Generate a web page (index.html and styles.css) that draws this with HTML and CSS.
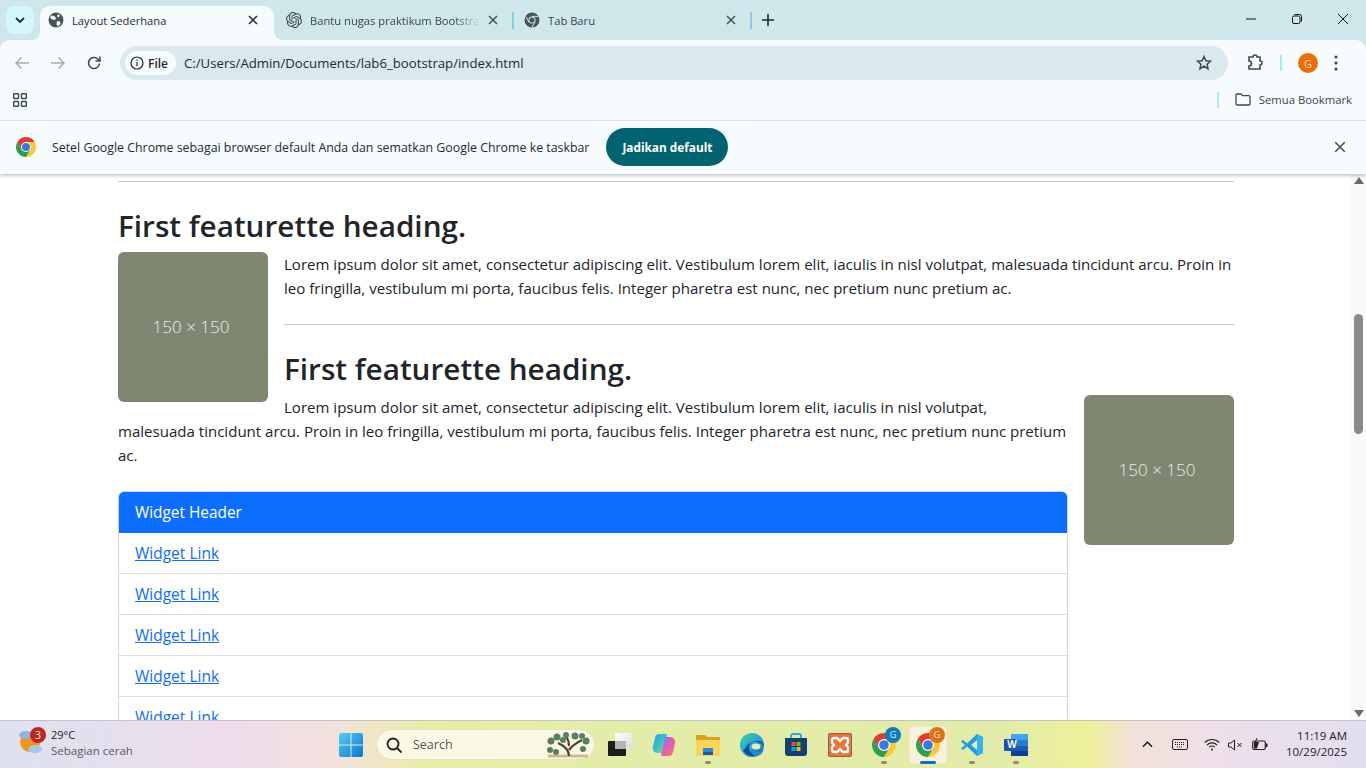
FILE: index.html
```html
<!DOCTYPE html>
<html lang="id">
<head>
<meta charset="utf-8">
<title>Layout Sederhana</title>
<link rel="stylesheet" href="styles.css">
</head>
<body>
<div class="screen">
  <header class="tabstrip">
    <div class="tabsearch"><svg width="10" height="6" viewBox="0 0 10 6"><path d="M1 1l4 4 4-4" fill="none" stroke="#1f2a30" stroke-width="1.8"/></svg></div>
    <div class="tab active">
      <svg class="fav" width="16" height="16" viewBox="0 0 16 16"><circle cx="8" cy="8" r="7.5" fill="#4a5358"/><path d="M3 3.5l3 .5 2 2-1 2-2.5-.5L2 6zM9 9l3 .5.5 2.5-2.5 2.5-1.500-2z M10 2l2 1.500-1.500 2L9 4z" fill="#f6fbfe"/></svg>
      <span class="tabtitle">Layout Sederhana</span>
      <svg class="tabx" width="10" height="10" viewBox="0 0 10 10"><path d="M1 1l8 8M9 1l-8 8" stroke="#1f2a30" stroke-width="1.5"/></svg>
    </div>
    <div class="tab">
      <svg class="fav" width="16" height="16" viewBox="0 0 24 24" fill="#3e4a50"><path d="M22.2819 9.8211a5.9847 5.9847 0 0 0-.5157-4.9108 6.0462 6.0462 0 0 0-6.5098-2.9A6.0651 6.0651 0 0 0 4.9807 4.1818a5.9847 5.9847 0 0 0-3.9977 2.9 6.0462 6.0462 0 0 0 .7427 7.0966 5.98 5.98 0 0 0 .511 4.9107 6.051 6.051 0 0 0 6.5146 2.9001A5.9847 5.9847 0 0 0 13.2599 24a6.0557 6.0557 0 0 0 5.7718-4.2058 5.9894 5.9894 0 0 0 3.9977-2.9001 6.0557 6.0557 0 0 0-.7475-7.0729zm-9.022 12.6081a4.4755 4.4755 0 0 1-2.8764-1.0408l.1419-.0804 4.7783-2.7582a.7948.7948 0 0 0 .3927-.6813v-6.7369l2.02 1.1686a.071.071 0 0 1 .038.052v5.5826a4.504 4.504 0 0 1-4.4945 4.4944zm-9.6607-4.1254a4.4708 4.4708 0 0 1-.5346-3.0137l.142.0852 4.783 2.7582a.7712.7712 0 0 0 .7806 0l5.8428-3.3685v2.3324a.0804.0804 0 0 1-.0332.0615L9.74 19.9502a4.4992 4.4992 0 0 1-6.1408-1.6464zM2.3408 7.8956a4.485 4.485 0 0 1 2.3655-1.9728V11.6a.7664.7664 0 0 0 .3879.6765l5.8144 3.3543-2.0201 1.1685a.0757.0757 0 0 1-.071 0l-4.8303-2.7865A4.504 4.504 0 0 1 2.3408 7.872zm16.5963 3.8558L13.1038 8.364 15.1192 7.2a.0757.0757 0 0 1 .071 0l4.8303 2.7913a4.4944 4.4944 0 0 1-.6765 8.1042v-5.6772a.79.79 0 0 0-.407-.667zm2.0107-3.0231l-.142-.0852-4.7735-2.7818a.7759.7759 0 0 0-.7854 0L9.409 9.2297V6.8974a.0662.0662 0 0 1 .0284-.0615l4.8303-2.7866a4.4992 4.4992 0 0 1 6.6802 4.66zM8.3065 12.863l-2.02-1.1638a.0804.0804 0 0 1-.038-.0567V6.0742a4.4992 4.4992 0 0 1 7.3757-3.4537l-.142.0805L8.704 5.459a.7948.7948 0 0 0-.3927.6813zm1.0976-2.3654l2.602-1.4998 2.6069 1.4998v2.9994l-2.5974 1.4997-2.6067-1.4997Z"/></svg>
      <span class="tabtitle fade">Bantu nugas praktikum Bootstrap</span>
      <svg class="tabx" width="10" height="10" viewBox="0 0 10 10"><path d="M1 1l8 8M9 1l-8 8" stroke="#3e4a50" stroke-width="1.4"/></svg>
    </div>
    <i class="tabsep"></i>
    <div class="tab">
      <svg class="fav" width="16" height="16" viewBox="0 0 16 16"><circle cx="8" cy="8" r="7.500" fill="#4a5358"/><circle cx="8" cy="8" r="3.600" fill="#cfe6eb"/><circle cx="8" cy="8" r="2.600" fill="#4a5358"/><path d="M8 4.400h6.500M5 10.200L1.800 4.500M11.100 9.900L7.800 15.400" stroke="#cfe6eb" stroke-width="1"/></svg>
      <span class="tabtitle">Tab Baru</span>
      <svg class="tabx" width="10" height="10" viewBox="0 0 10 10"><path d="M1 1l8 8M9 1l-8 8" stroke="#3e4a50" stroke-width="1.4"/></svg>
    </div>
    <i class="tabsep"></i>
    <svg class="newtab" width="12" height="12" viewBox="0 0 12 12"><path d="M6 0v12M0 6h12" stroke="#1f2a30" stroke-width="1.600"/></svg>
    <div class="wincontrols">
      <svg width="10" height="10" viewBox="0 0 10 10"><path d="M0 5h10" stroke="#111" stroke-width="1"/></svg>
      <svg width="10" height="10" viewBox="0 0 10 10" fill="none" stroke="#111" stroke-width="1"><rect x=".5" y="2" width="7.500" height="7.500" rx="1.500"/><path d="M2.500 .5h5a2 2 0 0 1 2 2v5"/></svg>
      <svg width="10" height="10" viewBox="0 0 10 10"><path d="M0 0l10 10M10 0L0 10" stroke="#111" stroke-width="1"/></svg>
    </div>
  </header>

  <nav class="toolbar">
    <svg class="navicon" width="16" height="16" viewBox="0 0 16 16" fill="none" stroke="#a4adb1" stroke-width="1.500"><path d="M15 8H2M7.500 2.500L2 8l5.500 5.500"/></svg>
    <svg class="navicon" width="16" height="16" viewBox="0 0 16 16" fill="none" stroke="#a4adb1" stroke-width="1.500"><path d="M1 8h13M8.500 2.500L14 8l-5.500 5.500"/></svg>
    <svg class="navicon" width="16" height="16" viewBox="0 0 16 16" fill="none" stroke="#3e4a50" stroke-width="1.600"><path d="M13.500 8.500a5.500 5.500 0 1 1-1.500-4.300L14 6"/><path d="M14 1.500V6H9.500" stroke-width="1.500"/></svg>
    <div class="omnibox">
      <div class="chip">
        <svg width="14" height="14" viewBox="0 0 14 14" fill="none" stroke="#1f2a30" stroke-width="1.200"><circle cx="7" cy="7" r="6"/><path d="M7 6v4.200M7 3.500v1.300"/></svg>
        <span>File</span>
      </div>
      <span class="url">C:/Users/Admin/Documents/lab6_bootstrap/index.html</span>
      <svg class="star" width="16" height="16" viewBox="0 0 16 16" fill="none" stroke="#3e4a50" stroke-width="1.500"><path d="M8 1.500l1.900 4.200 4.600.5-3.400 3.100.9 4.500L8 11.100l-4 2.700.9-4.500L1.500 6.200l4.600-.5z"/></svg>
    </div>
    <svg class="ext" width="18" height="18" viewBox="0 0 18 18" fill="none" stroke="#3e4a50" stroke-width="1.600"><path d="M3 3h4a2 2 0 0 1 4 0h3v4a2 2 0 0 1 0 4v4H3v-3a2 2 0 0 0 0-5z"/></svg>
    <i class="barsep"></i>
    <div class="avatar">G</div>
    <svg class="kebab" width="4" height="16" viewBox="0 0 4 16" fill="#3e4a50"><circle cx="2" cy="2" r="1.600"/><circle cx="2" cy="8" r="1.600"/><circle cx="2" cy="14" r="1.600"/></svg>
  </nav>

  <div class="bookmarks">
    <svg width="14" height="14" viewBox="0 0 14 14" fill="none" stroke="#3e4a50" stroke-width="1.400"><rect x=".7" y=".7" width="4.800" height="4.800" rx=".5"/><rect x="8.500" y=".7" width="4.800" height="4.800" rx=".5"/><rect x=".7" y="8.500" width="4.800" height="4.800" rx=".5"/><rect x="8.500" y="8.500" width="4.800" height="4.800" rx=".5"/></svg>
    <i class="barsep bm"></i>
    <svg class="folder" width="16" height="13" viewBox="0 0 16 13" fill="none" stroke="#3e4a50" stroke-width="1.300"><path d="M1 2a1 1 0 0 1 1-1h4l1.500 1.700H14a1 1 0 0 1 1 1V11a1 1 0 0 1-1 1H2a1 1 0 0 1-1-1z"/></svg>
    <span class="bmtext">Semua Bookmark</span>
  </div>

  <div class="infobar">
    <svg class="chromelogo" width="20" height="20" viewBox="4 4 40 40"><use href="#chrome"/></svg>
    <span class="infotext">Setel Google Chrome sebagai browser default Anda dan sematkan Google Chrome ke taskbar</span>
    <button class="defaultbtn">Jadikan default</button>
    <svg class="infox" width="10" height="10" viewBox="0 0 10 10"><path d="M0 0l10 10M10 0L0 10" stroke="#3e4a50" stroke-width="1.500"/></svg>
  </div>

  <main class="viewport">
    <div class="page">
      <div class="container">
        <hr class="rule first">
        <h2>First featurette heading.</h2>
        <div class="ph left">150 × 150</div>
        <p>Lorem ipsum dolor sit amet, consectetur adipiscing elit. Vestibulum lorem elit, iaculis in nisl volutpat, malesuada tincidunt arcu. Proin in leo fringilla, vestibulum mi porta, faucibus felis. Integer pharetra est nunc, nec pretium nunc pretium ac.</p>
        <hr class="rule">
        <h2>First featurette heading.</h2>
        <div class="ph right">150 × 150</div>
        <p>Lorem ipsum dolor sit amet, consectetur adipiscing elit. Vestibulum lorem elit, iaculis in nisl volutpat, malesuada tincidunt arcu. Proin in leo fringilla, vestibulum mi porta, faucibus felis. Integer pharetra est nunc, nec pretium nunc pretium ac.</p>
        <div class="widget">
          <div class="widgethead">Widget Header</div>
          <a class="widgetlink" href="#">Widget Link</a>
          <a class="widgetlink" href="#">Widget Link</a>
          <a class="widgetlink" href="#">Widget Link</a>
          <a class="widgetlink" href="#">Widget Link</a>
          <a class="widgetlink" href="#">Widget Link</a>
        </div>
      </div>
    </div>
    <div class="scrollbar">
      <svg width="10" height="7" viewBox="0 0 10 7"><path d="M5 0l5 7H0z" fill="#6b6b6b"/></svg>
      <div class="track"><div class="thumb"></div></div>
      <svg width="10" height="7" viewBox="0 0 10 7"><path d="M5 7l5-7H0z" fill="#6b6b6b"/></svg>
    </div>
  </main>

  <footer class="taskbar">
    <div class="weather">
      <svg class="wicon" width="26" height="28" viewBox="0 0 26 28"><circle cx="12" cy="15" r="10" fill="#f0941f"/><ellipse cx="8" cy="8" rx="7" ry="4" fill="#8fb4e0"/><ellipse cx="17" cy="22" rx="7" ry="4" fill="#a9c6ea"/></svg>
      <span class="wbadge">3</span>
      <div class="wtext"><span class="temp">29°C</span><span class="cond">Sebagian cerah</span></div>
    </div>
    <div class="tbcenter">
      <svg class="winlogo" width="24" height="24" viewBox="0 0 24 24"><defs><linearGradient id="win" x1="0" y1="0" x2="1" y2="1"><stop offset="0" stop-color="#55cdf7"/><stop offset="1" stop-color="#0a75cf"/></linearGradient></defs><path d="M0 2a2 2 0 0 1 2-2h9.500v11.500H0zM12.500 0H22a2 2 0 0 1 2 2v9.500H12.500zM0 12.500h11.500V24H2a2 2 0 0 1-2-2zM12.500 12.500H24V22a2 2 0 0 1-2 2h-9.500z" fill="url(#win)"/></svg>
      <div class="search">
        <svg width="16" height="16" viewBox="0 0 16 16" fill="none" stroke="#1c1c1c" stroke-width="1.800"><circle cx="7" cy="7" r="5.500"/><path d="M11 11l4.500 4.500"/></svg>
        <span>Search</span>
        <svg class="tree" width="46" height="26" viewBox="0 0 46 26"><path d="M3 24h40" stroke="#cdbb90" stroke-width="3"/><path d="M24 24c0-6-4-10-11-13M24 18c3-4 7-7 13-10M24 14c0-4-1-7-3-10" stroke="#4d4034" stroke-width="2.200" fill="none"/><g fill="#587f63"><circle cx="6" cy="9" r="3.500"/><circle cx="12" cy="5" r="3.500"/><circle cx="18" cy="8" r="3"/><circle cx="21" cy="3" r="3"/><circle cx="30" cy="4" r="3.500"/><circle cx="37" cy="4" r="3"/><circle cx="41" cy="9" r="3.500"/><circle cx="5" cy="18" r="3"/><circle cx="11" cy="20" r="3"/><circle cx="38" cy="17" r="3"/></g></svg>
      </div>
      <div class="tbapp">
        <svg width="24" height="24" viewBox="0 0 24 24"><defs><linearGradient id="snap" x1="0" y1="0" x2="1" y2="1"><stop offset="0" stop-color="#fff"/><stop offset="1" stop-color="#dcdcdc"/></linearGradient></defs><rect x="7" y="0" width="17" height="16" rx="1" fill="url(#snap)"/><rect x="0" y="8" width="18" height="15" rx="1" fill="#1c1c1c"/><rect x="7" y="8" width="11" height="8" fill="#b4b4b4"/></svg>
      </div>
      <div class="tbapp">
        <svg width="24" height="24" viewBox="0 0 24 24"><defs><linearGradient id="copa" x1="0" y1="0" x2="1" y2="1"><stop offset="0" stop-color="#2f9fe8"/><stop offset=".6" stop-color="#36c9c0"/><stop offset="1" stop-color="#e8d23c"/></linearGradient><linearGradient id="copb" x1="0" y1="0" x2="1" y2="1"><stop offset="0" stop-color="#8a6cf0"/><stop offset=".6" stop-color="#ec5fa6"/><stop offset="1" stop-color="#f58a3c"/></linearGradient></defs><path d="M7 1h8l-4 19H6C2 20 0 17 1 13L3 5c.5-2.500 2-4 4-4z" fill="url(#copa)"/><path d="M17 4h1c3.500 0 6 3 5 7l-2 8c-.5 2.500-2 4-4 4H9l4-19z" fill="url(#copb)"/></svg>
      </div>
      <div class="tbapp dot">
        <svg width="24" height="24" viewBox="0 0 24 24"><path d="M0 3a1 1 0 0 1 1-1h8l2 2h12a1 1 0 0 1 1 1v4H0z" fill="#d9a21c"/><path d="M0 7h24v15a1 1 0 0 1-1 1H1a1 1 0 0 1-1-1z" fill="#fbd25a"/><rect x="7" y="15" width="10" height="7" rx="1" fill="#1f8ed6"/><rect x="7" y="19" width="10" height="3" fill="#0f5fa8"/></svg>
      </div>
      <div class="tbapp">
        <svg width="24" height="24" viewBox="0 0 24 24"><defs><linearGradient id="edge" x1="0" y1="0" x2="1" y2="1"><stop offset="0" stop-color="#38d39a"/><stop offset=".5" stop-color="#2aa6d8"/><stop offset="1" stop-color="#0e5fa8"/></linearGradient></defs><circle cx="12" cy="12" r="12" fill="url(#edge)"/><path d="M24 13c0-3-3-5-7-5-5 0-8 3-8 7s4 7 8 7c-6 2-12 0-14-5 2 1 3-6 9-8 6-1 10 1 12 4z" fill="#0b4f94"/><ellipse cx="16" cy="13.500" rx="4.500" ry="3" fill="#e6ecaa"/><path d="M12 14c0 3 3 5 7 5 2 0 4-1 5-3-1 4-5 8-9 7-3-1-4-5-3-9z" fill="#1b8ad0"/></svg>
      </div>
      <div class="tbapp">
        <svg width="24" height="24" viewBox="0 0 24 24"><path d="M7 6V3a2 2 0 0 1 2-2h6a2 2 0 0 1 2 2v3" fill="none" stroke="#2aa9d8" stroke-width="1.800"/><path d="M1 5h22v15a3 3 0 0 1-3 3H4a3 3 0 0 1-3-3z" fill="#12406f"/><rect x="7.500" y="9" width="4" height="4" fill="#f25022"/><rect x="12.500" y="9" width="4" height="4" fill="#7fba00"/><rect x="7.500" y="14" width="4" height="4" fill="#00a4ef"/><rect x="12.500" y="14" width="4" height="4" fill="#ffb900"/></svg>
      </div>
      <div class="tbapp">
        <svg width="24" height="24" viewBox="0 0 24 24"><rect width="24" height="24" rx="2" fill="#e8743a"/><rect x=".5" y=".5" width="23" height="23" rx="2" fill="none" stroke="#a8582d"/><path d="M6 5h3l3 3 3-3h3a2 2 0 0 1 2 2v2c0 1.500-1 2-2 3 1 1 2 1.500 2 3v2a2 2 0 0 1-2 2h-3l-3-3-3 3H6a2 2 0 0 1-2-2v-2c0-1.500 1-2 2-3-1-1-2-1.500-2-3V7a2 2 0 0 1 2-2z" fill="none" stroke="#fff" stroke-width="2.400"/></svg>
      </div>
      <div class="tbapp dot">
        <svg width="24" height="24" viewBox="4 4 40 40"><use href="#chrome"/></svg>
        <span class="chromebadge blue">G</span>
      </div>
      <div class="tbapp current">
        <svg width="24" height="24" viewBox="4 4 40 40"><use href="#chrome"/></svg>
        <span class="chromebadge orange">G</span>
      </div>
      <div class="tbapp dot">
        <svg width="24" height="24" viewBox="0 0 24 24"><path d="M17 1l6 3v16l-6 3L7 13.500l-4 3.500-2-1.500L5 12 1 8.500 3 7l4 3.500z" fill="#1f9be0"/><path d="M17 1l6 3v16l-6 3z" fill="#33b3f0"/><path d="M17 7l-6 5 6 5z" fill="#e4ecaa"/></svg>
      </div>
      <div class="tbapp dot">
        <svg width="24" height="24" viewBox="0 0 24 24"><rect x="7" y="1" width="17" height="6" fill="#41a5ee"/><rect x="7" y="7" width="17" height="6" fill="#2b7cd3"/><rect x="7" y="13" width="17" height="5" fill="#185abd"/><rect x="7" y="18" width="17" height="5" fill="#103f91"/><rect x="0" y="6" width="12" height="12" rx="1" fill="#1a52b0"/></svg>
        <span class="wordw">W</span>
      </div>
    </div>
    <div class="tray">
      <svg class="tray-up" width="11" height="7" viewBox="0 0 12 7"><path d="M1 6l5-5 5 5" fill="none" stroke="#111" stroke-width="1.400"/></svg>
      <svg class="tray-kb" width="16" height="11" viewBox="0 0 16 11" fill="none" stroke="#222" stroke-width="1"><rect x=".5" y=".5" width="15" height="10" rx="1.500"/><path d="M3 3.500h10M3 5.500h10M5 8h6" stroke-dasharray="1 1"/></svg>
      <svg class="tray-wifi" width="16" height="13" viewBox="0 0 16 13" fill="none" stroke="#222" stroke-width="1.100"><path d="M.8 4.500a10 10 0 0 1 14.400 0M3 7a7 7 0 0 1 10 0M5.200 9.200a4 4 0 0 1 5.600 0"/><circle cx="8" cy="11.500" r="1" fill="#222" stroke="none"/></svg>
      <svg class="tray-vol" width="15" height="12" viewBox="0 0 15 12" fill="none" stroke="#222" stroke-width="1"><path d="M.5 4v4h2.500L6.500 11V1L3 4z"/><path d="M9.500 4l4 4M13.500 4l-4 4"/></svg>
      <svg class="tray-bat" width="16" height="13" viewBox="0 0 16 13"><rect x=".7" y="3" width="12.600" height="8.500" rx="1.500" fill="none" stroke="#222" stroke-width="1.200"/><rect x="14" y="5.500" width="1.500" height="3.500" fill="#222"/><path d="M2 4h5l-2 6.500H2z" fill="#222"/><path d="M5 0L3 5h2L4 8" stroke="#222" fill="none"/></svg>
      <div class="clock"><span>11:19 AM</span><span>10/29/2025</span></div>
    </div>
  </footer>
</div>

<svg class="defs" width="0" height="0">
  <defs>
    <g id="chrome">
      <path d="M6.680 14A20 20 0 0 1 41.320 14H24L15.340 29z" fill="#e33b2e"/>
      <path d="M41.320 14A20 20 0 0 1 24 44L32.660 29 24 14z" fill="#fcc934"/>
      <path d="M24 44A20 20 0 0 1 6.680 14L15.340 29H32.660z" fill="#2f9e4f"/>
      <circle cx="24" cy="24" r="10" fill="#fff"/>
      <circle cx="24" cy="24" r="8" fill="#3b78e7"/>
    </g>
  </defs>
</svg>
</body>
</html>
```
FILE: styles.css
```css
* { box-sizing: border-box; }
html, body { margin: 0; height: 100%; overflow: hidden; }
body { font-family: "Open Sans", "Noto Sans", sans-serif; color: #212529; background: #fff; }
.screen { width: 1366px; height: 768px; display: flex; flex-direction: column; overflow: hidden; background: #cfe6eb; }
.defs { position: absolute; }
i { display: block; font-style: normal; }

.tabstrip { height: 40px; flex: none; display: flex; align-items: flex-start; background: #cfe6eb; padding: 6px 0 0 6px; }
.tabsearch { width: 28px; height: 28px; border-radius: 8px; background: #d3f6fd; display: flex; align-items: center; justify-content: center; margin-right: 6px; }
.tab { height: 34px; display: flex; align-items: center; padding: 0 0 6px 8px; gap: 8px; font-size: 11.200px; color: #3a464c; flex: none; }
.tab.active { background: #f6fbfe; border-radius: 10px 10px 0 0; color: #1f2a30; width: 234px; padding: 0 16px 6px 8px; position: relative; }
.tab.active::before, .tab.active::after { content: ""; position: absolute; bottom: 0; width: 8px; height: 8px; }
.tab.active::before { left: -8px; background: radial-gradient(circle at 0 0, transparent 7.500px, #f6fbfe 8px); }
.tab.active::after { right: -8px; background: radial-gradient(circle at 100% 0, transparent 7.500px, #f6fbfe 8px); }
.tab:nth-child(3) { padding-left: 12px; width: 238px; padding-right: 14px; }
.tab:nth-child(5) { width: 236px; padding-left: 10px; padding-right: 14px; }
.tabtitle { flex: 1; white-space: nowrap; overflow: hidden; }
.tabtitle.fade { -webkit-mask-image: linear-gradient(to right, #000 85%, transparent); mask-image: linear-gradient(to right, #000 85%, transparent); }
.fav, .tabx { flex: none; }
.tabsep { width: 2px; height: 17px; background: #86cfe0; margin-top: 6px; flex: none; }
.newtab { margin: 8px 0 0 10px; flex: none; }
.wincontrols { margin-left: auto; display: flex; gap: 36px; padding: 8px 18px 0 0; }
.wincontrols svg { display: block; }

.toolbar { height: 40px; flex: none; display: flex; align-items: center; background: #f6fbfe; padding: 6px 20px 0 14px; border-radius: 10px 10px 0 0; position: relative; }
.navicon { margin-right: 20px; flex: none; }
.navicon:nth-child(3) { margin-right: 18px; }
.omnibox { width: 1108px; height: 34px; border-radius: 17px; background: #d9e9ee; display: flex; align-items: center; padding: 0 16px 0 5px; flex: none; }
.chip { height: 24px; width: 51px; border-radius: 12px; background: #f6fbfe; display: flex; align-items: center; gap: 4px; padding-left: 5px; font-size: 12px; font-weight: 600; color: #1f2a30; flex: none; }
.url { margin-left: 8px; font-size: 13.200px; color: #1f2a30; white-space: nowrap; flex: 1; }
.star { flex: none; }
.ext { margin-left: 18px; flex: none; }
.barsep { width: 2px; height: 16px; background: #a5e8f8; margin-left: 16px; flex: none; }
.avatar { width: 20px; height: 20px; border-radius: 50%; background: #ee6c00; color: #fde3cf; font-size: 11px; display: flex; align-items: center; justify-content: center; margin-left: 16px; flex: none; }
.kebab { margin-left: 16px; flex: none; }

.bookmarks { height: 40px; flex: none; display: flex; align-items: center; background: #f6fbfe; padding: 0 14px 1px 13px; }
.barsep.bm { margin-left: auto; }
.folder { margin-left: 16px; flex: none; }
.bmtext { margin-left: 8px; font-size: 11.300px; color: #3a464c; white-space: nowrap; }

.infobar { height: 54px; flex: none; display: flex; align-items: center; background: #f6fbfe; border-top: 1px solid #dde3e6; padding: 0 21px 0 16px; box-shadow: 0 2px 3px rgba(0,0,0,.22); position: relative; z-index: 2; }
.chromelogo { flex: none; margin-top: -1px; }
.infotext { margin-left: 16px; font-size: 12.360px; color: #1f2a30; white-space: nowrap; }
.defaultbtn { margin: -2px 0 0 17px; height: 38px; width: 122px; border: 0; border-radius: 19px; background: #00636f; color: #fff; font: 700 11.800px "Open Sans", sans-serif; padding: 0; }
.infox { margin: -2px 0 0 auto; flex: none; }

.viewport { flex: 1; min-height: 0; display: flex; overflow: hidden; background: #fff; }
.page { flex: 1; min-width: 0; overflow: hidden; }
.container { width: 1116px; margin-left: 118px; padding-top: 7px; }
.rule { height: 1px; margin: 0; border: 0; background: #c6c7c8; }
.rule.first { margin-bottom: 25px; }
h2 { margin: 0 0 7px; font-size: 29.700px; line-height: 38px; font-weight: 600; color: #212529; }
p { margin: 0; font-size: 15.050px; line-height: 24px; }
p + .rule { margin: 24px 0 25px; }
.ph { width: 150px; height: 150px; border-radius: 6px; background: #7d8771; color: #eceee8; font-size: 17px; font-weight: 300; display: flex; align-items: center; justify-content: center; padding: 0 4px 2px 0; }
.ph.left { float: left; margin-right: 16px; }
.ph.right { float: right; margin-left: 16px; }
.widget { margin-top: 24px; overflow: hidden; border: 1px solid #d3d5d7; border-radius: 6px 6px 0 0; }
.widgethead { height: 41px; background: #0d6efd; color: #fff; font-size: 15.400px; display: flex; align-items: center; padding: 0 16px; }
.widgetlink { display: flex; align-items: center; height: 41px; padding: 0 16px; font-size: 15.500px; color: #0d6efd; text-decoration: underline; border-top: 1px solid #dcdddf; }
.widgetlink:first-of-type { border-top: 0; height: 40px; }

.scrollbar { width: 15px; flex: none; background: #fafafa; display: flex; flex-direction: column; align-items: center; padding: 3px 0 3px; }
.track { flex: 1; width: 100%; display: flex; flex-direction: column; }
.thumb { width: 9px; height: 120px; margin: 130px auto 0; border-radius: 5px; background: #8a8a8a; }

.taskbar { height: 48px; flex: none; position: relative; display: flex; align-items: center; border-top: 1px solid #c2c4c4; background: linear-gradient(90deg, #dfe1ef 0, #e5dfee 130px, #efdcec 230px, #f3e2dc 340px, #eeeab8 400px, #e6eea5 430px, #e3eca9 700px, #e2eba8 1000px, #eff19a 1088px, #f3e2d8 1130px, #eedfea 1220px, #e2dff0 1366px); }
.weather { position: absolute; left: 18px; top: 6px; display: flex; gap: 7px; }
.wbadge { position: absolute; left: 12px; top: 0; width: 16px; height: 16px; border-radius: 50%; background: #c4241c; color: #fff; font-size: 10.500px; display: flex; align-items: center; justify-content: center; }
.wicon { flex: none; }
.wtext { display: flex; flex-direction: column; font-size: 11px; line-height: 16px; color: #1c1c1c; }
.cond { color: #5a5a5a; font-size: 11.500px; }
.tbcenter { position: absolute; left: 339px; top: 0; height: 47px; display: flex; align-items: center; }
.winlogo { flex: none; margin-right: 14px; }
.search { width: 219px; height: 31px; border-radius: 16px; background: #fbf9e6; border: 1px solid #dfe3bf; display: flex; align-items: center; padding: 0 3px 0 9px; gap: 11px; font-size: 12.500px; color: #555; margin-right: 3px; margin-left: -1px; }
.search span { flex: 1; }
.tbapp { width: 44px; height: 38px; position: relative; display: flex; align-items: center; justify-content: center; border-radius: 5px; flex: none; }
.tbapp.dot::after { content: ""; position: absolute; bottom: 0; left: 50%; width: 6px; height: 3px; margin-left: -3px; border-radius: 2px; background: #8a8c7c; }
.tbapp.current { background: #f8f1dc; box-shadow: 0 0 0 1px #efe9cf inset; width: 38px; margin: 0 3px; }
.tbapp.current::after { content: ""; position: absolute; bottom: 0; left: 11px; width: 16px; height: 3px; border-radius: 2px; background: #0f6cc8; }
.chromebadge { position: absolute; top: 1px; left: 23px; width: 16px; height: 16px; border-radius: 50%; color: #dfeef8; font-size: 9px; display: flex; align-items: center; justify-content: center; }
.chromebadge.blue { background: #0f7cc0; }
.chromebadge.orange { background: #e4700f; left: 20px; }
.wordw { position: absolute; left: 12px; top: 13px; width: 12px; text-align: center; color: #fff; font-size: 10px; font-weight: 700; font-family: "Liberation Sans", sans-serif; }

.tray { position: absolute; right: 19px; top: 0; height: 47px; display: flex; align-items: center; }
.tray-up { margin-right: 19px; flex: none; }
.tray-kb { margin-right: 16px; flex: none; }
.tray-wifi { margin-right: 8px; flex: none; }
.tray-vol { margin-right: 9px; flex: none; }
.tray-bat { margin-right: 18px; flex: none; }
.clock { display: flex; flex-direction: column; align-items: flex-end; font-size: 11.500px; line-height: 16px; color: #1c1c1c; margin-top: -2px; }
```
